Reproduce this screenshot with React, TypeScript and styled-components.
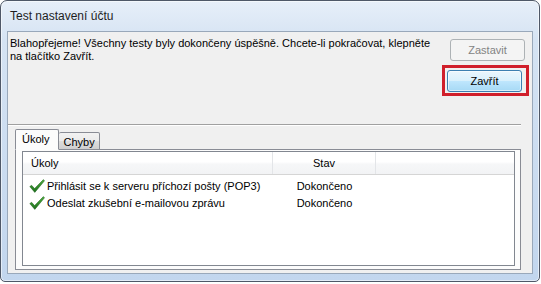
import React from 'react';
import styled, { createGlobalStyle } from 'styled-components';

interface TaskRow {
  name: string;
  status: string;
}

const TASKS: TaskRow[] = [
  { name: 'Přihlásit se k serveru příchozí pošty (POP3)', status: 'Dokončeno' },
  { name: 'Odeslat zkušební e-mailovou zprávu', status: 'Dokončeno' }
];

const CheckIcon: React.FC = () => (
  <svg width="16" height="14" viewBox="0 0 16 14" xmlns="http://www.w3.org/2000/svg">
    <defs>
      <linearGradient id="chk" x1="0" y1="0" x2="0" y2="1">
        <stop offset="0" stopColor="#4fae3c" />
        <stop offset="1" stopColor="#1c6e1c" />
      </linearGradient>
    </defs>
    <path
      d="M0.8 7.6 L2.6 6.3 L5.6 9.6 L14.4 0.6 L15.5 1.8 L5.8 13.4 Z"
      fill="url(#chk)"
      stroke="#1a5e1a"
      strokeWidth="0.5"
      strokeLinejoin="round"
    />
  </svg>
);

const App: React.FC = () => {
  return (
    <>
      <GlobalStyle />
      <Window>
        <TitleBar>Test nastavení účtu</TitleBar>
        <Client>
          <TopSection>
            <Message>
              Blahopřejeme! Všechny testy byly dokončeny úspěšně. Chcete-li pokračovat, klepněte
              <br />
              na tlačítko Zavřít.
            </Message>
            <ButtonColumn>
              <Button disabled>Zastavit</Button>
              <Highlight>
                <Button $default>Zavřít</Button>
              </Highlight>
            </ButtonColumn>
          </TopSection>
          <Separator />
          <TabsArea>
            <TabStrip>
              <Tab $active>Úkoly</Tab>
              <Tab>Chyby</Tab>
            </TabStrip>
            <TabPanel>
              <ListView>
                <HeaderRow>
                  <HeaderCell $width={250}>Úkoly</HeaderCell>
                  <HeaderCell $width={103} $center>Stav</HeaderCell>
                  <HeaderFill />
                </HeaderRow>
                <Rows>
                  {TASKS.map((task) => (
                    <Row key={task.name}>
                      <NameCell>
                        <CheckIcon />
                        <span>{task.name}</span>
                      </NameCell>
                      <StatusCell>{task.status}</StatusCell>
                    </Row>
                  ))}
                </Rows>
              </ListView>
            </TabPanel>
          </TabsArea>
        </Client>
      </Window>
    </>
  );
};

const GlobalStyle = createGlobalStyle`
  body {
    margin: 0;
    background: #ffffff;
    font-family: "Liberation Sans", Arial, sans-serif;
  }
`;

const Window = styled.div`
  box-sizing: border-box;
  width: 540px;
  height: 282px;
  border: 1px solid #4f5868;
  border-radius: 7px 7px 5px 5px;
  background: linear-gradient(to bottom, #e7eff9 0%, #d5e3f3 14%, #c2d6ee 100%);
  box-shadow: inset 0 0 0 1px rgba(255, 255, 255, 0.55);
  padding: 0 6px 7px 6px;
  display: flex;
  flex-direction: column;
`;

const TitleBar = styled.div`
  height: 30px;
  display: flex;
  align-items: center;
  padding-left: 3px;
  font-size: 12px;
  color: #1e1e1e;
`;

const Client = styled.div`
  flex: 1;
  border: 1px solid #99a8ba;
  background: #f0f0f0;
  display: flex;
  flex-direction: column;
  min-height: 0;
`;

const TopSection = styled.div`
  height: 92px;
  display: flex;
  justify-content: space-between;
  align-items: flex-start;
`;

const Message = styled.div`
  padding: 5px 0 0 2px;
  font-size: 11px;
  line-height: 13px;
  color: #000;
`;

const ButtonColumn = styled.div`
  display: flex;
  flex-direction: column;
  align-items: flex-end;
  gap: 4px;
  padding: 7px 3px 0 0;
`;

const Button = styled.button<{ $default?: boolean }>`
  box-sizing: border-box;
  width: 75px;
  height: 22px;
  margin: 0;
  padding: 0;
  font-family: "Liberation Sans", Arial, sans-serif;
  font-size: 11px;
  font-weight: normal;
  border-radius: 3px;
  color: #000;
  border: 1px solid ${(p) => (p.$default ? '#3c7fb1' : '#707070')};
  background: ${(p) =>
    p.$default
      ? 'linear-gradient(to bottom, #eaf6fd 0%, #d9f0fc 48%, #bee6fd 52%, #a7d9f5 100%)'
      : 'linear-gradient(to bottom, #f2f2f2 0%, #ebebeb 48%, #dddddd 52%, #cfcfcf 100%)'};
  box-shadow: ${(p) => (p.$default ? 'inset 0 0 0 1px rgba(255,255,255,0.6)' : 'none')};

  &:disabled {
    margin-right: 4px;
    border-color: #adb2b5;
    background: #f4f4f4;
    color: #838383;
  }
`;

const Highlight = styled.div`
  border: 3px solid #d01f2b;
  padding: 2px 4px 1px 2px;
  display: flex;
`;

const Separator = styled.div`
  margin-right: 11px;
  border-top: 1px solid #a0a0a0;
  border-bottom: 1px solid #ffffff;
`;

const TabsArea = styled.div`
  flex: 1;
  display: flex;
  flex-direction: column;
  margin: 4px 11px 3px 7px;
  min-height: 0;
`;

const TabStrip = styled.div`
  display: flex;
  align-items: flex-end;
  height: 20px;
  position: relative;
  z-index: 1;
  margin-bottom: -1px;
`;

const Tab = styled.div<{ $active?: boolean }>`
  box-sizing: border-box;
  height: ${(p) => (p.$active ? '21px' : '18px')};
  padding: ${(p) => (p.$active ? '2px 8px 0 6px' : '2px 4px 0 5px')};
  font-size: 11px;
  line-height: 14px;
  color: #000;
  border: 1px solid #898c95;
  border-bottom: ${(p) => (p.$active ? '1px solid #fcfcfc' : '1px solid #898c95')};
  border-left-width: ${(p) => (p.$active ? '1px' : '0')};
  border-radius: 2px 2px 0 0;
  background: ${(p) =>
    p.$active ? '#fcfcfc' : 'linear-gradient(to bottom, #f2f2f2 0%, #ebebeb 50%, #dddddd 51%, #cfcfcf 100%)'};
`;

const TabPanel = styled.div`
  flex: 1;
  border: 1px solid #898c95;
  background: #fcfcfc;
  display: flex;
  padding: 1px 5px 3px 6px;
  min-height: 0;
`;

const ListView = styled.div`
  flex: 1;
  border: 1px solid #828790;
  background: #ffffff;
  display: flex;
  flex-direction: column;
`;

const HeaderRow = styled.div`
  height: 22px;
  display: flex;
  background: linear-gradient(to bottom, #ffffff 0%, #ffffff 45%, #f6f7f8 55%, #f2f3f5 100%);
  border-bottom: 1px solid #d5d5d5;
`;

const HeaderCell = styled.div<{ $width: number; $center?: boolean }>`
  box-sizing: border-box;
  width: ${(p) => p.$width}px;
  display: flex;
  align-items: center;
  justify-content: ${(p) => (p.$center ? 'center' : 'flex-start')};
  padding-left: ${(p) => (p.$center ? '0' : '8px')};
  border-right: 1px solid #e3e5e8;
  font-size: 11px;
  color: #000;
`;

const HeaderFill = styled.div`
  flex: 1;
`;

const Rows = styled.div`
  padding-top: 2px;
  display: flex;
  flex-direction: column;
`;

const Row = styled.div`
  height: 17px;
  display: flex;
  align-items: center;
  font-size: 11px;
  color: #000;
`;

const NameCell = styled.div`
  width: 250px;
  display: flex;
  align-items: center;
  gap: 2px;
  padding-left: 6px;
  box-sizing: border-box;
`;

const StatusCell = styled.div`
  width: 103px;
  text-align: center;
`;

export default App;
